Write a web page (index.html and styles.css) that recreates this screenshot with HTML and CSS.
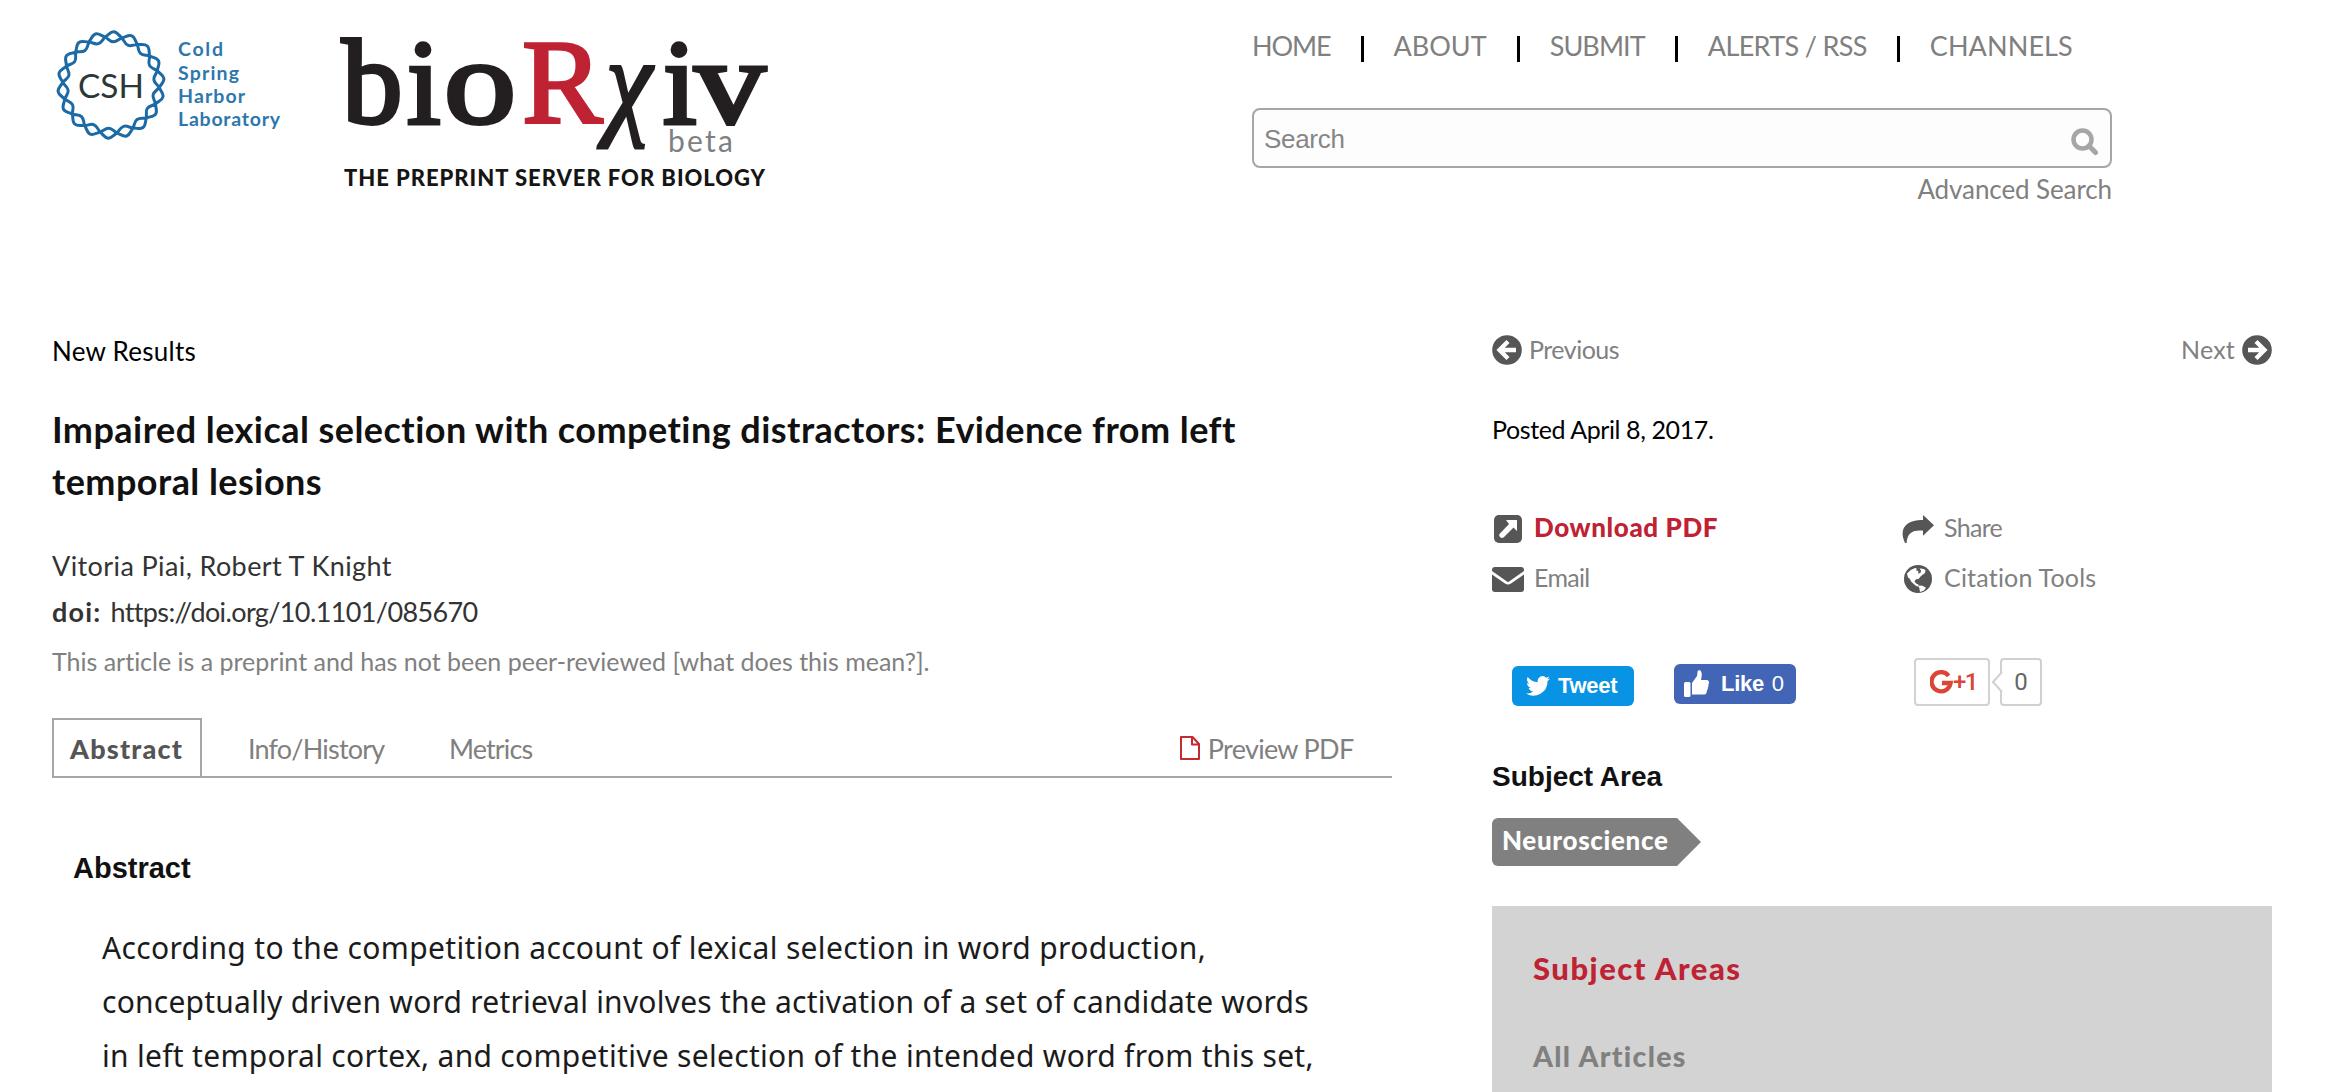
FILE: index.html
```html
<!DOCTYPE html>
<html lang="en">
<head>
<meta charset="utf-8">
<title>Impaired lexical selection with competing distractors | bioRxiv</title>
<link rel="stylesheet" href="styles.css">
</head>
<body>
<header class="header">
  <svg class="logos" width="780" height="200" viewBox="0 0 780 200" role="img" aria-label="bioRxiv">
    <defs>
      <g id="link">
        <path d="M-8.400-47.600C-5-50-3.500-53.300 0-53.300S5-50 8.400-47.600M-8.400-47.600C-5-46-3.500-43.200 0-43.200S5-46 8.400-47.600"/>
      </g>
    </defs>
    <g class="ring" transform="translate(111 85) rotate(3)">
      <use href="#link"/><use href="#link" transform="rotate(20)"/><use href="#link" transform="rotate(40)"/>
      <use href="#link" transform="rotate(60)"/><use href="#link" transform="rotate(80)"/><use href="#link" transform="rotate(100)"/>
      <use href="#link" transform="rotate(120)"/><use href="#link" transform="rotate(140)"/><use href="#link" transform="rotate(160)"/>
      <use href="#link" transform="rotate(180)"/><use href="#link" transform="rotate(200)"/><use href="#link" transform="rotate(220)"/>
      <use href="#link" transform="rotate(240)"/><use href="#link" transform="rotate(260)"/><use href="#link" transform="rotate(280)"/>
      <use href="#link" transform="rotate(300)"/><use href="#link" transform="rotate(320)"/><use href="#link" transform="rotate(340)"/>
    </g>
    <text class="csh" x="78" y="97.5" textLength="66" lengthAdjust="spacingAndGlyphs">CSH</text>
    <g class="lab">
      <text x="178" y="56" textLength="45">Cold</text>
      <text x="178" y="79.500" textLength="61">Spring</text>
      <text x="178" y="102.500" textLength="67">Harbor</text>
      <text x="178" y="126" textLength="102">Laboratory</text>
    </g>
    <g class="word">
      <text x="342 407" y="122.500">bi</text>
      <text x="444" y="122.500" textLength="72" lengthAdjust="spacingAndGlyphs">o</text>
      <text class="word-r" x="522" y="122.500">R</text>
      <text class="word-chi" transform="translate(606 121.500) scale(.86 1)">χ</text>
      <text x="663" y="122.500">i</text>
      <text x="694.500" y="122.500" textLength="71" lengthAdjust="spacingAndGlyphs">v</text>
    </g>
    <text class="beta" x="668" y="152" textLength="65">beta</text>
    <text class="tagline" x="344" y="186" textLength="421">THE PREPRINT SERVER FOR BIOLOGY</text>
  </svg>
  <div class="tools">
    <nav class="nav">
      <a class="n1">HOME</a><a class="n2">ABOUT</a><a class="n3">SUBMIT</a><a class="n4">ALERTS / RSS</a><a class="n5">CHANNELS</a>
    </nav>
    <div class="search">
      <span>Search</span>
      <svg width="28" height="28" viewBox="0 0 28 28"><circle cx="11.500" cy="11.500" r="9" fill="none" stroke="#a6a6a6" stroke-width="4.500"/><path d="M18 18l6.500 6.500" stroke="#a6a6a6" stroke-width="5" stroke-linecap="round"/></svg>
    </div>
    <a class="advanced">Advanced Search</a>
  </div>
</header>
<div class="page">
  <main class="article">
    <div class="kind">New Results</div>
    <h1>Impaired lexical selection with competing distractors: Evidence from left<br>temporal lesions</h1>
    <div class="authors">Vitoria Piai, Robert T Knight</div>
    <div class="doi"><b>doi:</b><span>https://doi.org/10.1101/085670</span></div>
    <div class="note">This article is a preprint and has not been peer-reviewed [what does this mean?].</div>
    <div class="tabs">
      <a class="tab active">Abstract</a>
      <a class="tab info">Info/History</a>
      <a class="tab metrics">Metrics</a>
      <a class="tab preview"><svg width="20" height="24" viewBox="0 0 20 24"><path d="M1 1h11.500L19 8v15H1zM12 1v7.500h7" fill="none" stroke="#c52a2e" stroke-width="2" stroke-linejoin="round"/></svg>Preview PDF</a>
    </div>
    <h2>Abstract</h2>
    <p class="body"><span class="l1">According to the competition account of lexical selection in word production,</span><br><span class="l2">conceptually driven word retrieval involves the activation of a set of candidate words</span><br><span class="l3">in left temporal cortex, and competitive selection of the intended word from this set,</span></p>
  </main>
  <aside class="side">
    <div class="pager">
      <a class="prev"><svg width="30" height="30" viewBox="0 0 30 30"><circle cx="15" cy="15" r="14.800" fill="#565656"/><path d="M16 6.500L7.500 15l8.500 8.500M8.500 15h15.500" fill="none" stroke="#fff" stroke-width="4.300"/></svg><span>Previous</span></a>
      <a class="next"><span>Next</span><svg width="30" height="30" viewBox="0 0 30 30"><circle cx="15" cy="15" r="14.800" fill="#565656"/><path d="M14 6.500l8.500 8.500-8.500 8.500M21.500 15H6" fill="none" stroke="#fff" stroke-width="4.300"/></svg></a>
    </div>
    <div class="posted">Posted April 8, 2017.</div>
    <div class="actions">
      <a class="download"><svg width="32" height="28" viewBox="0 0 32 28"><rect x="2" width="28" height="28" rx="5" fill="#565656"/><path d="M14 5h11v11l-3.500-3.500-10 10q-2 1-3.500-.500t-.500-3l9.500-10z" fill="#fff"/></svg><span>Download PDF</span></a>
      <a class="share"><svg width="32" height="28" viewBox="0 0 32 28"><path d="M21 0l11 10.200-11 10.500v-5.200C11 14.800 5.500 17 4.500 28H3C-4 13 5 4.500 21 5z" fill="#565656"/></svg><span>Share</span></a>
      <a class="email"><svg width="32" height="28" viewBox="0 0 32 28"><path d="M3 2h26q3 0 3 3v1L16 17.200 0 6V5q0-3 3-3zM0 9.500l13 9q3 2 6 0l13-9V24q0 3-3 3H3q-3 0-3-3z" fill="#565656"/></svg><span>Email</span></a>
      <a class="cite"><svg width="32" height="28" viewBox="0 0 32 28"><circle cx="16" cy="14" r="14" fill="#565656"/><path d="M5 8.500Q8 4.500 13 3l2 .700-1 1.800 2.500.500-.500 2.500 2.500-.500.500-2.500-1.500-2Q21 3 23.500 5l-.500 3-4 3-2.500 3-2.500.300-1.500 2 1.500 2.200 2.500 1v2.500l-3-1.500L9.500 17l-2-3.500L6 12.500z" fill="#fff"/><path d="M16.500 20.500l4 .300 3.500 2-2 2.700-4 1.500-.500-3z" fill="#fff"/></svg><span>Citation Tools</span></a>
    </div>
    <div class="social">
      <a class="tweet"><svg width="24" height="22" viewBox="0 0 24 20"><path d="M24 2.400a9.800 9.800 0 0 1-2.800.8A4.900 4.900 0 0 0 23.300.5a9.900 9.900 0 0 1-3.100 1.200 4.900 4.900 0 0 0-8.400 4.500A14 14 0 0 1 1.700 1a4.900 4.900 0 0 0 1.500 6.600A4.900 4.900 0 0 1 1 7c0 2.300 1.600 4.400 3.900 4.900a5 5 0 0 1-2.200.1 4.900 4.900 0 0 0 4.600 3.400A9.900 9.900 0 0 1 0 17.400 14 14 0 0 0 21.500 5a10 10 0 0 0 2.500-2.600z" fill="#fff"/></svg><b>Tweet</b></a>
      <a class="like"><svg width="26" height="28" viewBox="0 0 26 28"><rect x="0" y="12" width="6.500" height="15" rx="1.500" fill="#fff"/><path d="M8 13l5-7 .7-5q.3-1.200 2-.700 3.300 1.200 1.300 9.700h6q2.500.500 2 3-.1 1-.8 1.500.8 1.500-.4 3 .3 1.800-.9 2.800.2 1.700-.5 2.700-.5 1.500-2.400 1.500H8z" fill="#fff"/></svg><b>Like</b><span>0</span></a>
      <a class="plus"><svg width="23" height="26" viewBox="0 0 24 26"><path d="M19.500 5.500A10 10 0 1 0 21.500 13H12.500" fill="none" stroke="#db4437" stroke-width="4.500"/></svg><b>+1</b></a>
      <span class="count"><svg width="12" height="22" viewBox="0 0 12 22"><path d="M11 1L2 11l9 10" fill="#fff" stroke="#d0d0d0" stroke-width="2"/></svg>0</span>
    </div>
    <h3>Subject Area</h3>
    <a class="tag"><span>Neuroscience</span><svg width="24" height="48" viewBox="0 0 24 48"><path d="M0 0l24 24L0 48z" fill="#808080"/></svg></a>
    <div class="areas">
      <div class="areas-title">Subject Areas</div>
      <a class="areas-all">All Articles</a>
    </div>
  </aside>
</div>
</body>
</html>
```
FILE: styles.css
```css
* { box-sizing: border-box; }
body { margin: 0; background: #fff; color: #333; font-family: Lato, sans-serif; height: 1092px; overflow: hidden; white-space: nowrap; }
svg { display: block; flex: none; }
h1, h2, h3, p { margin: 0; }

.header { display: flex; height: 320px; }
.logos { flex: none; margin-right: 472px; }
.ring { fill: none; stroke: #1b6aa5; stroke-width: 3; }
.csh { font-size: 33px; fill: #2c3836; }
.lab { font-size: 19.5px; font-weight: 700; fill: #2e77ad; }
.word { font-family: "Liberation Serif", serif; font-size: 121px; fill: #231f20; stroke: #231f20; stroke-width: 4; }
.word .word-r { fill: #be2233; stroke: #be2233; stroke-width: 3; }
.word .word-chi { font-style: italic; stroke-width: 3; }
.beta { font-size: 30px; fill: #7d7f83; }
.tagline { font-size: 22px; font-weight: 900; fill: #151515; }

.tools { width: 860px; padding-top: 26px; }
.nav { display: flex; height: 40px; font-size: 27px; line-height: 40px; color: #808080; }
.nav a { display: flex; align-items: center; }
.nav a + a::before { content: ""; width: 3px; height: 26px; background: #000; margin: 6px 30px 0 30px; }
.n1 { letter-spacing: -1.1px; }
.n2 { letter-spacing: 0; }
.n3 { letter-spacing: -.9px; }
.n4 { letter-spacing: -.65px; }
.n5 { letter-spacing: .1px; }
.search { display: flex; justify-content: space-between; margin-top: 42px; height: 60px; border: 2px solid #a6a6a6; border-radius: 8px; background: #fdfdfd; padding: 18px 11px 0 10px; font: 26px/40px "Liberation Sans", sans-serif; letter-spacing: -.3px; color: #868686; }
.search span { margin-top: -9px; }
.advanced { display: block; margin-top: 5px; text-align: right; font-size: 26px; line-height: 32px; letter-spacing: -.1px; color: #808080; }

.page { display: flex; }
.article { width: 1340px; margin-left: 52px; padding-top: 11px; }
.kind { font-size: 26px; line-height: 40px; letter-spacing: .25px; color: #000; }
h1 { margin-top: 32px; font-size: 36px; line-height: 52px; font-weight: 700; letter-spacing: .45px; color: #111; }
.authors { margin-top: 38.5px; font-size: 27px; line-height: 40px; letter-spacing: .4px; }
.doi { margin-top: 6px; display: flex; gap: 9px; font-size: 27px; line-height: 40px; }
.doi b { letter-spacing: 1.2px; }
.doi span { letter-spacing: -.62px; }
.note { margin-top: 9px; font-size: 25px; line-height: 40px; letter-spacing: -.01px; color: #808080; }
.tabs { display: flex; margin-top: 37.5px; height: 60px; border-bottom: 2px solid #a6a6a6; font-size: 27px; line-height: 40px; color: #808080; }
.tab { padding-top: 10.5px; }
.active { width: 150px; padding: 8.5px 0 0 16px; border: 2px solid #a6a6a6; border-bottom: 0; font-weight: 900; letter-spacing: 1.2px; color: #555; }
.info { margin-left: 46px; letter-spacing: -.8px; }
.metrics { margin-left: 64.5px; letter-spacing: -.85px; }
.preview { display: flex; margin-left: auto; margin-right: 38.5px; gap: 8px; letter-spacing: -.69px; }
.preview svg { margin-top: 7.5px; }
h2 { margin: 70px 0 0 21px; font: bold 29px/40px "Liberation Sans", sans-serif; color: #111; }
.body { margin: 32.5px 0 0 50px; font: 30px/54px "Noto Sans", sans-serif; color: #1b1b1b; }
.l1 { letter-spacing: .34px; }
.l2 { letter-spacing: .23px; }
.l3 { letter-spacing: .3px; }

.side { width: 780px; margin-left: 100px; padding-top: 9px; font-size: 25px; line-height: 40px; color: #808080; }
.pager { display: flex; justify-content: space-between; height: 40px; }
.pager a { display: flex; gap: 7px; }
.pager svg { margin-top: 6px; }
.prev { letter-spacing: -.5px; }
.next { letter-spacing: .2px; }
.posted { margin-top: 40px; letter-spacing: -.4px; color: #000; }
.actions { margin-top: 58px; display: grid; grid-template-columns: 410px 1fr; row-gap: 10px; }
.actions a { display: flex; gap: 10px; height: 40px; }
.actions svg { margin-top: 8px; }
.download { font-size: 26px; font-weight: 900; letter-spacing: .6px; color: #be2233; }
.share, .email { letter-spacing: -.7px; }
.cite { letter-spacing: .2px; }
.social { display: flex; margin-top: 61px; padding-left: 20px; height: 48px; font: 22px/40px "Liberation Sans", sans-serif; color: #fff; }
.tweet, .like { display: flex; width: 122px; height: 40px; border-radius: 6px; }
.tweet { margin-top: 8px; padding-left: 14px; gap: 8px; background: #0993e4; letter-spacing: -.3px; }
.tweet svg { margin-top: 9px; }
.like { margin: 6px 0 0 40px; padding-left: 10px; background: #4266b5; }
.like svg { margin-top: 6px; }
.like b { margin: 0 8px 0 11px; letter-spacing: -.3px; }
.plus { display: flex; width: 76px; height: 48px; margin-left: 118px; padding-left: 14px; border: 2px solid #d2d2d2; border-radius: 4px; color: #db4437; font-size: 24px; line-height: 45px; letter-spacing: -1.5px; }
.plus b { font-family: Roboto, sans-serif; font-weight: 500; }
.plus svg { margin-top: 10px; }
.count { position: relative; width: 42px; height: 48px; margin-left: 10px; border: 2px solid #d0d0d0; border-radius: 4px; text-align: center; font: 24px/45px Roboto, sans-serif; color: #666; }
.count svg { position: absolute; left: -11px; top: 11px; }
h3 { margin-top: 51px; font: bold 28px/40px "Liberation Sans", sans-serif; color: #111; }
.tag { display: flex; margin-top: 21px; height: 48px; font-size: 26px; font-weight: 900; line-height: 45px; letter-spacing: .65px; color: #fff; }
.tag span { width: 185px; padding-left: 10px; background: #808080; border-radius: 6px 0 0 6px; }
.areas { margin-top: 40px; height: 186px; padding: 42px 0 0 41px; background: #d3d3d3; font-weight: 900; }
.areas-title { font-size: 31px; letter-spacing: 1.5px; color: #be2233; }
.areas-all { display: block; margin-top: 47.5px; font-size: 28.5px; letter-spacing: 1.3px; color: #808080; }
```
